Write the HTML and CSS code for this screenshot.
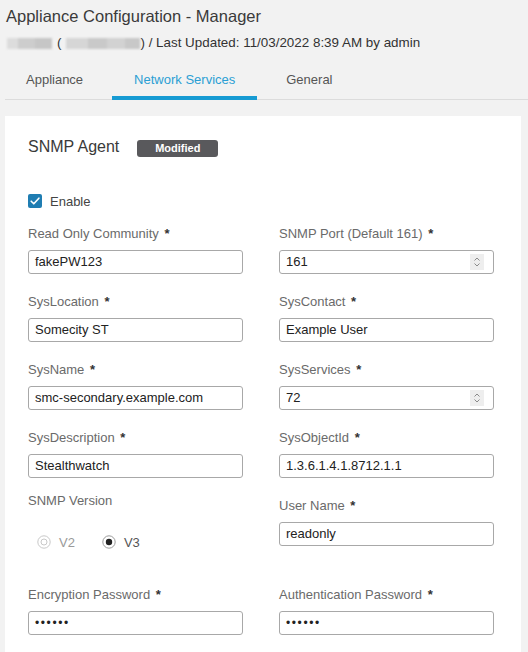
FILE: index.html
```html
<!DOCTYPE html>
<html>
<head>
<meta charset="utf-8">
<link rel="stylesheet" href="styles.css">
</head>
<body>
<div class="page">
  <header class="header">
    <h1 class="title">Appliance Configuration - Manager</h1>
    <div class="subtitle"><span class="blur blur-a"></span><span class="paren">(</span><span class="blur blur-b"></span><span>) / Last Updated: 11/03/2022 8:39 AM by admin</span></div>
  </header>
  <nav class="tabs">
    <div class="tab">Appliance</div>
    <div class="tab active">Network Services</div>
    <div class="tab">General</div>
  </nav>
  <section class="panel">
    <div class="panel-head">
      <h2 class="panel-title">SNMP Agent</h2>
      <span class="badge">Modified</span>
    </div>
    <label class="check">
      <span class="checkbox"><svg width="14" height="14" viewBox="0 0 14 14"><path d="M3.2 7.2 L5.8 9.8 L10.9 4.2" fill="none" stroke="#fff" stroke-width="1.6" stroke-linecap="round" stroke-linejoin="round"/></svg></span>
      <span>Enable</span>
    </label>
    <div class="grid">
      <div class="field">
        <div class="label">Read Only Community <b>*</b></div>
        <div class="input">fakePW123</div>
      </div>
      <div class="field">
        <div class="label">SNMP Port (Default 161) <b>*</b></div>
        <div class="input"><span>161</span><span class="spin"><svg width="14" height="16" viewBox="0 0 14 16"><path d="M4.5 6.5 L7 4 L9.5 6.5 M4.5 9.5 L7 12 L9.5 9.5" fill="none" stroke="#8a8a8a" stroke-width="1"/></svg></span></div>
      </div>
      <div class="field">
        <div class="label">SysLocation <b>*</b></div>
        <div class="input">Somecity ST</div>
      </div>
      <div class="field">
        <div class="label">SysContact <b>*</b></div>
        <div class="input">Example User</div>
      </div>
      <div class="field">
        <div class="label">SysName <b>*</b></div>
        <div class="input">smc-secondary.example.com</div>
      </div>
      <div class="field">
        <div class="label">SysServices <b>*</b></div>
        <div class="input"><span>72</span><span class="spin"><svg width="14" height="16" viewBox="0 0 14 16"><path d="M4.5 6.5 L7 4 L9.5 6.5 M4.5 9.5 L7 12 L9.5 9.5" fill="none" stroke="#8a8a8a" stroke-width="1"/></svg></span></div>
      </div>
      <div class="field">
        <div class="label">SysDescription <b>*</b></div>
        <div class="input">Stealthwatch</div>
      </div>
      <div class="field">
        <div class="label">SysObjectId <b>*</b></div>
        <div class="input">1.3.6.1.4.1.8712.1.1</div>
      </div>
      <div class="version">
        <div class="label">SNMP Version</div>
        <div class="radios">
          <span class="radio disabled"><svg width="14" height="14" viewBox="0 0 14 14"><circle cx="7" cy="7" r="6.2" fill="#fff" stroke="#c8c8c8" stroke-width="1"/><circle cx="7" cy="7" r="3" fill="none" stroke="#c8c8c8" stroke-width="1"/></svg><span>V2</span></span>
          <span class="radio"><svg width="14" height="14" viewBox="0 0 14 14"><circle cx="7" cy="7" r="6.2" fill="#fff" stroke="#9a9a9a" stroke-width="1"/><circle cx="7" cy="7" r="3.2" fill="#222"/></svg><span>V3</span></span>
        </div>
      </div>
      <div class="field">
        <div class="label">User Name <b>*</b></div>
        <div class="input">readonly</div>
      </div>
      <div class="field">
        <div class="label">Encryption Password <b>*</b></div>
        <div class="input dots">••••••</div>
      </div>
      <div class="field">
        <div class="label">Authentication Password <b>*</b></div>
        <div class="input dots">••••••</div>
      </div>
    </div>
  </section>
</div>
</body>
</html>
```

FILE: styles.css
```css
* { box-sizing: border-box; }
html, body {
  margin: 0;
  padding: 0;
  background: #f2f2f2;
  font-family: "Liberation Sans", Arial, sans-serif;
  color: #333;
  overflow: hidden;
}
.page { width: 528px; height: 652px; overflow: hidden; }
.header { padding-left: 6px; padding-top: 6px; }
.title {
  margin: 0;
  font-size: 16.5px;
  line-height: 20px;
  font-weight: normal;
  color: #3a3a3a;
}
.subtitle {
  margin-top: 9px;
  font-size: 13.4px;
  line-height: 16px;
  height: 16px;
  color: #333;
  display: flex;
  align-items: center;
}
.blur {
  display: inline-block;
  height: 11px;
  filter: blur(0.8px);
}
.blur-a {
  width: 45px;
  margin-left: 1px;
  background: linear-gradient(to right, #dcdcdc 0 25%, #cdcdcd 25% 62%, #c6c6c6 62%);
}
.blur-b {
  width: 74px;
  background: linear-gradient(to right, #d6d6d6 0 30%, #c9c9c9 30% 55%, #d2d2d2 55% 80%, #c8c8c8 80%);
}
.paren { margin: 0 5px 0 5px; }
.tabs {
  margin: 9px 0 0 5px;
  display: flex;
  gap: 7px;
  border-bottom: 1px solid #dcdcdc;
  height: 40px;
}
.tab {
  padding: 12px 22px 8px;
  font-size: 13px;
  line-height: 16px;
  color: #555;
  border-bottom: 4px solid transparent;
  height: 40px;
}
.tab:first-child { margin-left: -1px; }
.tab.active {
  color: #2b9fd4;
  border-bottom-color: #179bd3;
}
.panel {
  margin: 16px 0 0 5px;
  width: 516px;
  height: 536px;
  background: #fff;
  padding: 21px 27px 0 23px;
}
.panel-head {
  display: flex;
  align-items: center;
  height: 20px;
}
.panel-title {
  margin: 0;
  font-size: 16px;
  line-height: 20px;
  font-weight: normal;
  color: #3a3a3a;
}
.badge {
  margin-left: 18px;
  margin-top: 3px;
  width: 81px;
  height: 17px;
  background: #59595c;
  color: #fff;
  border-radius: 3px;
  font-size: 11px;
  font-weight: bold;
  line-height: 17px;
  text-align: center;
}
.check {
  margin-top: 36px;
  display: flex;
  align-items: center;
  height: 16px;
  font-size: 13px;
  color: #444;
  gap: 8px;
}
.checkbox {
  width: 14px;
  height: 14px;
  background: #1f7db2;
  border-radius: 2px;
  display: block;
}
.checkbox svg { display: block; }
.grid {
  margin-top: 17px;
  display: grid;
  grid-template-columns: 215px 215px;
  column-gap: 36px;
  row-gap: 20px;
}
.label {
  font-size: 13px;
  line-height: 16px;
  height: 16px;
  color: #6a6a6a;
  white-space: nowrap;
}
.label b {
  color: #333;
  font-weight: bold;
  margin-left: 2px;
}
.input {
  margin-top: 8px;
  height: 24px;
  border: 1px solid #a8a8a8;
  border-radius: 3px;
  padding: 0 9px 0 6px;
  font-size: 13px;
  line-height: 22px;
  color: #222;
  display: flex;
  align-items: center;
  justify-content: space-between;
  white-space: nowrap;
}
.spin {
  width: 14px;
  height: 16px;
  background: #eeeeee;
  display: block;
}
.spin svg { display: block; }
.dots {
  font-size: 12px;
  letter-spacing: 1.6px;
  justify-content: flex-start;
}
.version {
  margin-top: -5px;
  padding-bottom: 17px;
}
.radios {
  margin-top: 25px;
  margin-left: 9px;
  display: flex;
  gap: 27px;
  height: 16px;
  align-items: center;
}
.radio {
  display: flex;
  align-items: center;
  gap: 8px;
  font-size: 13px;
  color: #555;
}
.radio svg { display: block; }
.radio.disabled { color: #9a9a9a; }
```
